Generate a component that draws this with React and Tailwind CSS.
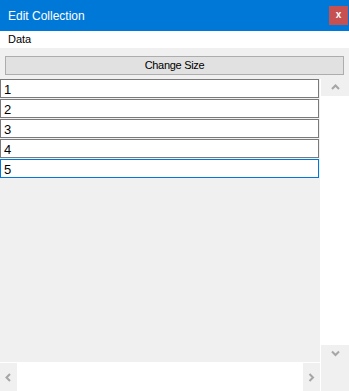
import React from "react";

const rows = ["1", "2", "3", "4", "5"];

function Chevron({ dir }) {
  // small scrollbar arrow, drawn as a thick chevron
  const paths = {
    up: "M1 5 L4.5 1.5 L8 5",
    down: "M1 1.5 L4.5 5 L8 1.5",
    left: "M5 1 L1.5 4.5 L5 8",
    right: "M1.5 1 L5 4.5 L1.5 8",
  };
  const vertical = dir === "up" || dir === "down";
  return (
    <svg
      width={vertical ? 9 : 7}
      height={vertical ? 7 : 9}
      viewBox={vertical ? "0 0 9 7" : "0 0 7 9"}
    >
      <path d={paths[dir]} fill="none" stroke="#a6a6a6" strokeWidth="2" />
    </svg>
  );
}

function App() {
  return (
    <div className="w-[349px] h-[391px] flex flex-col bg-[#f0f0f0] font-['Liberation_Sans',Arial,sans-serif] text-black overflow-hidden">
      {/* title bar */}
      <div className="h-[31px] bg-[#0078d7] flex items-center justify-between pl-2 pr-[1px]">
        <span className="text-white text-[12px]">Edit Collection</span>
        <div className="w-[19px] h-[19px] bg-[#c75050] flex items-center justify-center text-white text-[10px] font-bold leading-none pb-[1px]">
          x
        </div>
      </div>

      {/* menu */}
      <div className="h-[17px] bg-white pl-2 flex items-center text-[11px]">Data</div>

      {/* button */}
      <div className="px-[5px] pt-2 pb-1">
        <button className="w-full h-[19px] border border-[#adadad] bg-[#e1e1e1] text-[11px] tracking-[-0.3px] flex items-center justify-center">
          Change Size
        </button>
      </div>

      {/* list + vertical scrollbar */}
      <div className="flex flex-1 min-h-0">
        <div className="w-[320px] flex flex-col gap-px">
          {rows.map((r, i) => (
            <div
              key={r}
              className={
                "w-[319px] h-[19px] bg-white border pl-[3px] pt-[2px] flex items-center text-[13px] " +
                (i === rows.length - 1 ? "border-[#0078d7]" : "border-[#7a7a7a]")
              }
            >
              {r}
            </div>
          ))}
        </div>
        <div className="w-[29px] bg-white pl-px flex flex-col justify-between">
          <div className="h-[17px] bg-[#f0f0f0] flex items-center justify-center">
            <Chevron dir="up" />
          </div>
          <div className="h-[17px] bg-[#f0f0f0] flex items-center justify-center">
            <Chevron dir="down" />
          </div>
        </div>
      </div>

      {/* horizontal scrollbar */}
      <div className="h-[29px] bg-white flex items-end">
        <div className="w-[17px] h-[28px] bg-[#f0f0f0] flex items-center justify-center">
          <Chevron dir="left" />
        </div>
        <div className="flex-1" />
        <div className="w-[17px] h-[28px] bg-[#f0f0f0] flex items-center justify-center">
          <Chevron dir="right" />
        </div>
        <div className="w-[29px] h-full bg-white pl-px">
          <div className="h-full bg-[#f0f0f0]" />
        </div>
      </div>
    </div>
  );
}

export default App;
